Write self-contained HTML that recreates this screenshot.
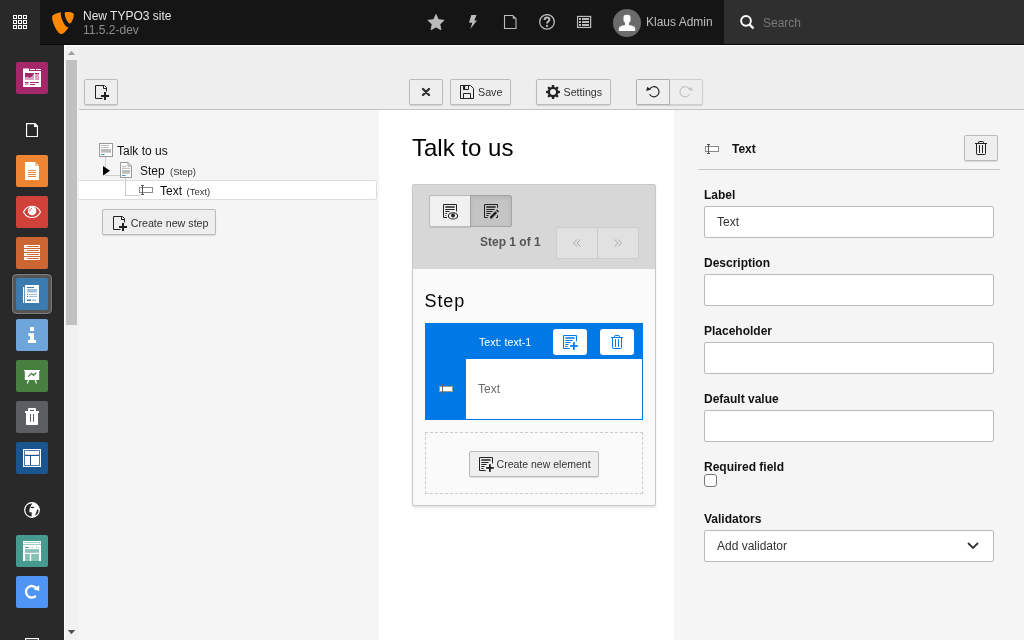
<!DOCTYPE html>
<html><head><meta charset="utf-8">
<style>
*{box-sizing:border-box}
html,body{margin:0;padding:0}
body{width:1024px;height:640px;overflow:hidden;position:relative;font-family:"Liberation Sans",sans-serif;background:#f5f5f5;color:#000}
.a{position:absolute}
svg{display:block}
.t{position:absolute;white-space:nowrap;line-height:1}
.btn{position:absolute;background:#eee;border:1px solid #bbb;border-radius:2px;box-shadow:0 1px 1px rgba(0,0,0,.12)}
.mi{position:absolute;left:16px;width:32px;height:32px;border-radius:2px}
.lbl{position:absolute;left:704px;font-weight:bold;font-size:12px;line-height:1;color:#111}
.inp{position:absolute;left:704px;width:290px;height:32px;background:#fff;border:1px solid #bbb;border-radius:2px}
</style></head><body><div id="root" style="position:absolute;left:0;top:0;width:1024px;height:640px;will-change:transform">

<!-- TOPBAR -->
<div class="a" style="left:0;top:0;width:1024px;height:45px;background:#151515"></div>
<div class="a" style="left:0;top:0;width:40px;height:45px;background:#292929"></div>
<div class="a" style="left:40px;top:44px;width:984px;height:1px;background:#0b0b0b"></div>
<div class="a" style="left:724px;top:0;width:300px;height:44px;background:#2f2f2f"></div>
<!-- grid icon -->
<svg class="a" style="left:12px;top:14px" width="16" height="16" viewBox="0 0 16 16" fill="none" stroke="#fff" stroke-width="1">
<rect x="1.5" y="1.5" width="3" height="3"/><rect x="6.5" y="1.5" width="3" height="3"/><rect x="11.5" y="1.5" width="3" height="3"/>
<rect x="1.5" y="6.5" width="3" height="3"/><rect x="6.5" y="6.5" width="3" height="3"/><rect x="11.5" y="6.5" width="3" height="3"/>
<rect x="1.5" y="11.5" width="3" height="3"/><rect x="6.5" y="11.5" width="3" height="3"/><rect x="11.5" y="11.5" width="3" height="3"/>
</svg>
<!-- typo3 logo -->
<svg class="a" style="left:52px;top:12px" width="22" height="22" viewBox="0 0 24 24"><path fill="#ff8700" d="M18.08 16.539c-.356.105-.64.144-1.012.144-3.048 0-7.524-10.652-7.524-14.197 0-1.305.31-1.74.745-2.116C6.56.808 2.082 2.177.651 3.917c-.31.436-.497 1.12-.497 1.99C.154 11.442 6.06 24 10.228 24c1.928 0 5.178-3.168 7.852-7.461M16.134 0c3.855 0 7.712.62 7.712 2.8 0 4.415-2.8 9.765-4.23 9.765-2.549 0-5.72-7.09-5.72-10.635C13.897.31 14.518 0 16.134 0"/></svg>
<div class="t" style="left:83px;top:10px;font-size:12px;color:#e6e6e6">New TYPO3 site</div>
<div class="t" style="left:83px;top:24px;font-size:12px;color:#8c8c8c">11.5.2-dev</div>

<!-- toolbar icons -->
<svg class="a" style="left:427px;top:13px" width="18" height="18" viewBox="0 0 18 18"><path fill="#bbb" stroke="#bbb" stroke-width=".7" stroke-linejoin="round" d="M9.00 1.35 L11.43 6.61 L17.18 7.29 L12.93 11.23 L14.05 16.91 L9.00 14.08 L3.95 16.91 L5.07 11.23 L0.82 7.29 L6.57 6.61z"/></svg>
<svg class="a" style="left:465px;top:14px" width="16" height="16" viewBox="0 0 16 16"><path fill="#bbb" d="M6.3 1h5.2L9.3 6.5H12L5.3 15l2-6.3H4z"/></svg>
<svg class="a" style="left:502px;top:14px" width="16" height="16" viewBox="0 0 16 16"><path fill="none" stroke="#bbb" stroke-width="1.1" d="M2.5 1.55h8.3l3.2 3.1v9.8H2.5z"/><path fill="#bbb" d="M10.8 1.5l3.2 3.2h-3.2z"/></svg>
<svg class="a" style="left:539px;top:14px" width="16" height="16" viewBox="0 0 16 16"><circle cx="8" cy="7.9" r="7.3" fill="none" stroke="#bbb" stroke-width="1.3"/><path fill="none" stroke="#bbb" stroke-width="2" d="M5.6 5.9c0-1.4 1.1-2.4 2.4-2.4s2.4.9 2.4 2.2c0 1.8-2.3 1.8-2.3 3.5v.4"/><rect x="7.05" y="10.9" width="2" height="2" fill="#bbb"/></svg>
<svg class="a" style="left:576px;top:14px" width="16" height="16" viewBox="0 0 16 16"><rect x="1.55" y="2.45" width="13.1" height="11" fill="none" stroke="#bbb" stroke-width="1.2"/><g fill="#bbb"><rect x="3" y="4" width="2" height="2"/><rect x="6" y="4" width="7" height="2"/><rect x="3" y="7" width="2" height="2"/><rect x="6" y="7" width="7" height="2"/><rect x="3" y="10" width="2" height="2"/><rect x="6" y="10" width="7" height="2"/></g></svg>
<!-- avatar -->
<div class="a" style="left:613px;top:9px;width:28px;height:28px;border-radius:50%;background:#6b6b6b;overflow:hidden">
<svg width="28" height="28" viewBox="0 0 28 28"><rect x="10.5" y="5.8" width="7" height="7.9" rx="2.6" fill="#fff"/><rect x="12" y="12" width="4" height="5" fill="#fff"/><path fill="#fff" d="M5.8 22v-2.2c0-1.6 1.3-2.5 3-3l3.2-.9 2 1 2-1 3.2.9c1.7.5 3 1.4 3 3V22z"/></svg>
</div>
<div class="t" style="left:646px;top:16px;font-size:12px;color:#bdbdbd">Klaus Admin</div>
<!-- search -->
<svg class="a" style="left:739px;top:15px" width="16" height="16" viewBox="0 0 16 16"><circle cx="7" cy="5.85" r="4.9" fill="none" stroke="#fff" stroke-width="1.9"/><path stroke="#fff" stroke-width="2.4" d="M10.2 9.2l4.3 4.3"/></svg>
<div class="t" style="left:763px;top:17px;font-size:12px;color:#7a7a7a">Search</div>

<!-- SIDEBAR -->
<div class="a" style="left:0;top:45px;width:64px;height:595px;background:#292929"></div>

<!-- MODULE ICONS -->
<div class="mi" style="top:62px;background:#a4276a"><svg width="32" height="32" viewBox="0 0 32 32"><path fill="#fff" d="M7 6.5h6v2.5h12V25H7z"/><rect x="14" y="7" width="5" height="1" fill="#fff"/><rect x="20" y="7" width="5" height="1" fill="#fff"/><rect x="9" y="11" width="9" height="7" fill="#a4276a"/><path fill="#d9a3c1" d="M9 18v-2.5l2.5-1 2 1.2 2.5-1.2 2-3V18z"/><rect x="19" y="11" width="4" height="7" fill="#d9a3c1"/><rect x="19" y="11" width="4" height="1" fill="#a4276a"/><rect x="9" y="20" width="3.5" height="3" fill="#d9a3c1"/><rect x="9" y="20" width="3.5" height="1" fill="#a4276a"/><rect x="14" y="20" width="9" height="1" fill="#a4276a"/><rect x="14" y="22" width="5" height="1" fill="#a4276a"/></svg></div>
<svg class="a" style="left:24px;top:122px" width="16" height="16" viewBox="0 0 16 16"><path fill="none" stroke="#fff" stroke-width="1.15" d="M2.55 1.55H11l2.45 2.45v10.45H2.55z M10.55 1.55V4.45h2.9"/><path fill="#fff" d="M11 1.55l2.45 2.45H11z"/></svg>
<div class="mi" style="top:155px;background:#ee8532"><svg width="32" height="32" viewBox="0 0 32 32"><path fill="#fff" d="M9 7h10l4 4v14H9z"/><path fill="#f6c29b" d="M19 7v4h4z"/><g fill="#ee8532"><rect x="12" y="15" width="8" height="1"/><rect x="12" y="17" width="8" height="1"/><rect x="12" y="19" width="8" height="1"/><rect x="12" y="21" width="8" height="1"/></g></svg></div>
<div class="mi" style="top:196px;background:#d0413a"><svg width="32" height="32" viewBox="0 0 32 32"><path fill="none" stroke="#fff" stroke-width="1.1" d="M7.5 15.9c1.8-3.4 5-5.6 8.5-5.6s6.7 2.2 8.5 5.6c-1.8 3.4-5 5.6-8.5 5.6s-6.7-2.2-8.5-5.6z"/><circle cx="16.1" cy="14.9" r="4.3" fill="#fff"/><path fill="none" stroke="#d0413a" stroke-width=".9" d="M13.9 15.6c-.2-1.5.6-2.9 1.9-3.3"/></svg></div>
<div class="mi" style="top:237px;background:#cb6633"><svg width="32" height="32" viewBox="0 0 32 32"><rect x="8" y="8" width="16" height="3" fill="#fff"/><rect x="11" y="9" width="12" height="1" rx=".5" fill="#cb6633"/><rect x="9" y="9" width="1" height="1" fill="#e9b89d"/><rect x="8" y="12" width="16" height="3" fill="#fff"/><rect x="11" y="13" width="12" height="1" rx=".5" fill="#cb6633"/><rect x="9" y="13" width="1" height="1" fill="#e9b89d"/><rect x="8" y="16" width="16" height="3" fill="#fff"/><rect x="11" y="17" width="12" height="1" rx=".5" fill="#cb6633"/><rect x="9" y="17" width="1" height="1" fill="#e9b89d"/><rect x="8" y="20" width="16" height="3" fill="#fff"/><rect x="11" y="21" width="12" height="1" rx=".5" fill="#cb6633"/><rect x="9" y="21" width="1" height="1" fill="#e9b89d"/></svg></div>
<div class="a" style="left:11px;top:273px;width:42px;height:42px;border:1px solid #1f1f1f;border-radius:5px"></div>
<div class="a" style="left:12px;top:274px;width:40px;height:40px;background:#555;border:1px solid #808080;border-radius:4px"></div>
<div class="mi" style="top:278px;background:#3b7bb0"><svg width="32" height="32" viewBox="0 0 32 32"><rect x="7" y="9" width="1.2" height="16" fill="#fff"/><rect x="9" y="7" width="14" height="18" fill="#fff"/><rect x="11" y="9" width="7" height="1" fill="#3b7bb0"/><rect x="11" y="11" width="10" height="3.5" fill="#9fc0dc"/><rect x="11" y="16" width="1" height="1" fill="#3b7bb0"/><rect x="13" y="16" width="8" height="1" fill="#9fc0dc"/><rect x="11" y="18" width="1" height="1" fill="#3b7bb0"/><rect x="13" y="18" width="8" height="1" fill="#9fc0dc"/><rect x="11" y="21.5" width="4" height="1.5" fill="#3b7bb0"/><rect x="16" y="21.5" width="4" height="1.5" fill="#9fc0dc"/></svg></div>
<div class="mi" style="top:319px;background:#6ea6dc"><svg width="32" height="32" viewBox="0 0 32 32"><rect x="14" y="8" width="4" height="4" fill="#fff"/><path fill="#fff" d="M12.3 14.2H18V21h2v3h-8v-3h2v-4.3h-1.7z"/></svg></div>
<div class="mi" style="top:360px;background:#477f41"><svg width="32" height="32" viewBox="0 0 32 32"><path fill="#fff" d="M8 10h16v1h-0.8v9H8.8v-9H8z"/><path fill="none" stroke="#477f41" stroke-width="1.3" d="M12.2 16.6l3.3-3.3 2 2 2.7-2.5"/><path fill="none" stroke="#fff" stroke-width="1.1" d="M12.6 20l-1.3 3.5M19.2 20l1.3 3.5"/></svg></div>
<div class="mi" style="top:401px;background:#5b5f63"><svg width="32" height="32" viewBox="0 0 32 32"><path fill="#fff" d="M12 10V7.8c0-.5.3-.8.8-.8h6.4c.5 0 .8.3.8.8V10h3v2H9v-2z"/><rect x="14" y="9" width="4" height="1" fill="#5b5f63"/><path fill="#fff" d="M10 12h12v11.2c0 .5-.3.8-.8.8H10.8c-.5 0-.8-.3-.8-.8z"/><rect x="14" y="13" width="1" height="7.8" fill="#5b5f63"/><rect x="17" y="13" width="1" height="7.8" fill="#5b5f63"/></svg></div>
<div class="mi" style="top:442px;background:#1b5590"><svg width="32" height="32" viewBox="0 0 32 32"><rect x="7.6" y="7.6" width="16.8" height="16.8" fill="none" stroke="#fff" stroke-width="1.2"/><rect x="9" y="9" width="14" height="3.8" fill="#fff"/><rect x="9" y="14" width="5" height="9" fill="#fff"/><rect x="15" y="14" width="8" height="9" fill="#fff"/></svg></div>
<svg class="a" style="left:24px;top:502px" width="16" height="16" viewBox="0 0 16 16"><circle cx="8" cy="8" r="7.2" fill="#fff"/><g fill="#292929"><path d="M8.3 1.3L6.8 1.25A6.85 6.85 0 0 0 5.66 14.44L7.7 14.4V10.2H5.4V7.4L6.6 4.6z"/><ellipse cx="8.5" cy="5.6" rx="1.9" ry=".75"/><path d="M13.3 7.3l1.5.9-.3 2.3-2.1 3.1-1.3-.2z"/></g><circle cx="8" cy="8" r="7.4" fill="none" stroke="#fff" stroke-width="1.1"/></svg>
<div class="mi" style="top:535px;background:#479a8e"><svg width="32" height="32" viewBox="0 0 32 32"><rect x="7" y="6" width="18" height="20" fill="#fff"/><rect x="8.3" y="7.2" width="13.5" height=".9" rx=".45" fill="#86c0b7"/><circle cx="23.4" cy="7.6" r=".7" fill="#479a8e"/><rect x="7" y="9.1" width="18" height=".8" fill="#86c0b7"/><rect x="9" y="12" width="3.8" height=".9" fill="#479a8e"/><circle cx="14.5" cy="12.4" r=".5" fill="#86c0b7"/><circle cx="16.5" cy="12.4" r=".5" fill="#86c0b7"/><circle cx="20.5" cy="12.4" r=".5" fill="#86c0b7"/><circle cx="22.5" cy="12.4" r=".5" fill="#86c0b7"/><rect x="9" y="14.2" width="14" height="3.6" fill="#86c0b7"/><rect x="9" y="19" width="4.8" height="7" fill="#86c0b7"/><rect x="15.2" y="19" width="7.8" height="7" fill="#86c0b7"/></svg></div>
<div class="mi" style="top:576px;background:#4f93f5"><svg width="32" height="32" viewBox="0 0 32 32"><path fill="none" stroke="#fff" stroke-width="2.3" d="M20.4 12.3A5.8 5.8 0 1 0 19.9 19.9"/><path fill="#fff" d="M17.3 13.2l5.9-3.9v5.6z"/></svg></div>
<svg class="a" style="left:24px;top:636px" width="16" height="16" viewBox="0 0 16 16"><rect x="1.6" y="2.6" width="12.8" height="12.8" fill="none" stroke="#fff" stroke-width="1.2"/></svg>

<!-- SCROLLBAR -->
<div class="a" style="left:64px;top:45px;width:15px;height:595px;background:#f1f1f1;border-left:1px solid #fff"></div>
<div class="a" style="left:64px;top:45px;width:960px;height:1px;background:#fff"></div>
<div class="a" style="left:66px;top:60px;width:11px;height:265px;background:#c1c1c1"></div>
<svg class="a" style="left:67px;top:50px" width="9" height="6" viewBox="0 0 9 6"><path fill="#a3a3a3" d="M4.5 0.8L8.2 5H0.8z"/></svg>
<svg class="a" style="left:67px;top:629px" width="9" height="6" viewBox="0 0 9 6"><path fill="#505050" d="M0.8 1h7.4L4.5 5.2z"/></svg>

<!-- DOCHEADER -->
<div class="a" style="left:79px;top:46px;width:945px;height:63px;background:#eee"></div>
<div class="a" style="left:79px;top:109px;width:945px;height:1px;background:#c3c3c3"></div>

<!-- PANELS -->
<div class="a" style="left:79px;top:110px;width:300px;height:530px;background:#f5f5f5"></div>
<div class="a" style="left:379px;top:110px;width:295px;height:530px;background:#fff"></div>
<div class="a" style="left:674px;top:110px;width:350px;height:530px;background:#f5f5f5"></div>


<!-- DOCHEADER BUTTONS -->
<div class="btn" style="left:84px;top:79px;width:34px;height:26px"></div>
<svg class="a" style="left:92px;top:82px" width="20" height="20" viewBox="0 0 20 20"><path fill="none" stroke="#222" stroke-width="1" d="M10.6 16.5H3.5V3.5h9l2 2v3.9M11.5 3.5v3h3"/><rect x="12" y="10" width="2" height="8" fill="#222"/><rect x="9" y="13" width="8" height="2" fill="#222"/></svg>

<div class="btn" style="left:409px;top:79px;width:34px;height:26px"></div>
<svg class="a" style="left:418px;top:84px" width="16" height="16" viewBox="0 0 16 16"><path stroke="#333" stroke-width="2.4" stroke-linecap="round" d="M5 5l6 6M11 5l-6 6"/></svg>
<div class="btn" style="left:450px;top:79px;width:61px;height:26px"></div>
<svg class="a" style="left:459px;top:84px" width="16" height="16" viewBox="0 0 16 16"><path fill="none" stroke="#222" stroke-width="1" d="M1.5 1.5h10l3 3v10h-13z M4.5 1.5v4h5v-4 M4.5 14.5v-5h7v5"/><rect x="4" y="1.5" width="2.2" height="4" fill="#222"/></svg>
<div class="t" style="left:478px;top:87px;font-size:10.7px;color:#333">Save</div>

<div class="btn" style="left:536px;top:79px;width:75px;height:26px"></div>
<svg class="a" style="left:545px;top:84px" width="16" height="16" viewBox="0 0 16 16"><g fill="#222"><circle cx="8" cy="8" r="5.3"/><rect x="6.8" y="1" width="2.4" height="14" rx=".6"/><rect x="6.8" y="1" width="2.4" height="14" rx=".6" transform="rotate(45 8 8)"/><rect x="6.8" y="1" width="2.4" height="14" rx=".6" transform="rotate(90 8 8)"/><rect x="6.8" y="1" width="2.4" height="14" rx=".6" transform="rotate(135 8 8)"/></g><circle cx="8" cy="8" r="3" fill="#eee"/></svg>
<div class="t" style="left:563.5px;top:87px;font-size:10.7px;color:#333">Settings</div>

<div class="btn" style="left:669px;top:79px;width:34px;height:26px;border-color:#cfcfcf;border-radius:0 2px 2px 0"></div>
<div class="btn" style="left:636px;top:79px;width:34px;height:26px;border-color:#b0b0b0;border-radius:2px 0 0 2px"></div>
<svg class="a" style="left:645px;top:84px" width="16" height="16" viewBox="0 0 16 16"><path fill="none" stroke="#222" stroke-width="1.2" d="M4.5 5.2A5.1 5.1 0 1 1 4.5 10.3"/><path fill="#222" d="M1.2 6.9l1.1-4.1 3.5 2.8z"/></svg>
<svg class="a" style="left:678px;top:84px" width="16" height="16" viewBox="0 0 16 16"><path fill="none" stroke="#c4c4c4" stroke-width="1.2" d="M11.5 5.2A5.1 5.1 0 1 0 11.5 10.3"/><path fill="#c4c4c4" d="M14.8 6.9l-1.1-4.1-3.5 2.8z"/></svg>

<!-- TREE -->
<div class="a" style="left:79px;top:180px;width:298px;height:20px;background:#fff;border-top:1px solid #ddd;border-bottom:1px solid #ddd;border-right:1px solid #ddd;border-radius:0 3px 3px 0"></div>
<div class="a" style="left:105px;top:157px;width:1px;height:19px;background:#ccc"></div>
<div class="a" style="left:105px;top:175px;width:15px;height:1px;background:#ccc"></div>
<div class="a" style="left:125px;top:178px;width:1px;height:18px;background:#ccc"></div>
<div class="a" style="left:125px;top:195px;width:15px;height:1px;background:#ccc"></div>
<svg class="a" style="left:99px;top:143px" width="14" height="14" viewBox="0 0 14 14"><rect x=".5" y=".5" width="13" height="13" fill="#fff" stroke="#999"/><rect x="2" y="2.2" width="8" height=".8" fill="#aaa"/><rect x="2" y="4" width="8" height=".8" fill="#aaa"/><rect x="2" y="6" width="10" height="3.7" fill="#bbb"/><rect x="2" y="11" width="3.5" height="1" fill="#4a90e2"/></svg>
<svg class="a" style="left:103px;top:166px" width="7" height="10" viewBox="0 0 7 10"><path fill="#000" d="M0 0l7 4.8L0 9.6z"/></svg>
<svg class="a" style="left:120px;top:162px" width="12" height="16" viewBox="0 0 12 16"><path fill="#fff" stroke="#999" d="M.5.5h7.5l3.5 3.5v11.5H.5z"/><path fill="none" stroke="#999" d="M8 .5v3.5h3.5"/><rect x="2" y="3.8" width="4.5" height=".9" fill="#aaa"/><rect x="2" y="5.8" width="8" height=".9" fill="#aaa"/><rect x="2" y="8" width="8" height="3.7" fill="#bbb"/><rect x="2" y="13" width="3.5" height="1" fill="#4a90e2"/></svg>
<div class="t" style="left:117px;top:145px;font-size:12px;color:#111">Talk to us</div>
<div class="t" style="left:140px;top:165px;font-size:12px;color:#111">Step <span style="font-size:9.5px;color:#333;margin-left:2px">(Step)</span></div>
<svg class="a" style="left:138px;top:184px" width="16" height="12" viewBox="0 0 16 12"><rect x="1.5" y="3.5" width="13" height="5" fill="#fff" stroke="#8a8a8a"/><path fill="none" stroke="#555" d="M4.5 1v10M3 1.5h3M3 10.5h3"/></svg>
<div class="t" style="left:160px;top:185px;font-size:12px;color:#111">Text <span style="font-size:9.5px;color:#333;margin-left:1.2px">(Text)</span></div>

<div class="btn" style="left:102px;top:209px;width:114px;height:26px"></div>
<svg class="a" style="left:110px;top:213px" width="20" height="20" viewBox="0 0 20 20"><path fill="none" stroke="#222" stroke-width="1" d="M10.6 16.5H3.5V3.5h9l2 2v3.9M11.5 3.5v3h3"/><rect x="12" y="10" width="2" height="8" fill="#222"/><rect x="9" y="13" width="8" height="2" fill="#222"/></svg>
<div class="t" style="left:130.7px;top:218px;font-size:10.7px;color:#333">Create new step</div>


<!-- STAGE -->
<div class="t" style="left:412px;top:136px;font-size:24px;color:#000">Talk to us</div>
<div class="a" style="left:412px;top:184px;width:244px;height:322px;background:#fafafa;border:1px solid #c8c8c8;border-radius:2px;box-shadow:0 2px 2px rgba(0,0,0,.1)"></div>
<div class="a" style="left:413px;top:185px;width:242px;height:84px;background:#d7d7d7"></div>
<div class="a" style="left:429px;top:195px;width:42px;height:32px;background:#f0f0f0;border:1px solid #bbb;border-radius:2px 0 0 2px;box-shadow:0 1px 1px rgba(0,0,0,.1)"></div>
<div class="a" style="left:470px;top:195px;width:42px;height:32px;background:#c4c4c4;border:1px solid #a5a5a5;border-radius:0 2px 2px 0;box-shadow:inset 0 2px 4px rgba(0,0,0,.08)"></div>
<svg class="a" style="left:440px;top:201px" width="20" height="20" viewBox="0 0 20 20"><path fill="none" stroke="#222" stroke-width="1" d="M7 16.5H3.5V3.5h13v7"/><g fill="#222"><rect x="5.2" y="5.2" width="9.6" height="1.6" rx=".5"/><rect x="5.2" y="8" width="9.6" height="1.1" rx=".5"/><rect x="5.2" y="10" width="4.4" height="1.1" rx=".5"/><rect x="5.2" y="12" width="2" height="1.1" rx=".5"/><rect x="5.2" y="14" width="1.1" height="1.1" rx=".5"/></g><ellipse cx="13" cy="14.9" rx="4.6" ry="3.1" fill="#f0f0f0" stroke="#222" stroke-width="1.1"/><circle cx="13" cy="14.5" r="1.9" fill="#222"/></svg>
<svg class="a" style="left:481px;top:201px" width="20" height="20" viewBox="0 0 20 20"><path fill="none" stroke="#222" stroke-width="1" d="M6.7 16.5H3.5V3.5h13v3.2M16.5 14.2v2.3h-1.5"/><g fill="#222"><rect x="5.2" y="5.2" width="9.5" height="1.6" rx=".5"/><rect x="5.2" y="8" width="8.5" height="1" rx=".5"/><rect x="5.2" y="10" width="6.5" height="1" rx=".5"/><rect x="5.2" y="12" width="4.5" height="1" rx=".5"/><rect x="5.2" y="14" width="2.5" height="1" rx=".5"/></g><path stroke="#222" stroke-width="2.6" d="M9.6 16.8l5.6-5.6"/><path stroke="#222" stroke-width="2.6" d="M15.9 10.5l1.2-1.2"/><path fill="#222" d="M9.2 17.5l.2-2 1.8 1.8z"/></svg>
<div class="t" style="left:480px;top:236px;font-size:12px;font-weight:bold;color:#555">Step 1 of 1</div>
<div class="a" style="left:556px;top:227px;width:83px;height:32px;background:#e1e1e1;border:1px solid #cdcdcd;border-radius:2px"></div>
<div class="a" style="left:597px;top:228px;width:1px;height:30px;background:#c8c8c8"></div>
<svg class="a" style="left:572px;top:238px" width="10" height="10" viewBox="0 0 10 10"><path fill="none" stroke="#aaa" stroke-width="1" d="M5 1.5L1.5 5 5 8.5M8.5 1.5L5 5l3.5 3.5"/></svg>
<svg class="a" style="left:613px;top:238px" width="10" height="10" viewBox="0 0 10 10"><path fill="none" stroke="#aaa" stroke-width="1" d="M1.5 1.5L5 5 1.5 8.5M5 1.5L8.5 5 5 8.5"/></svg>

<div class="t" style="left:424.5px;top:292px;font-size:18px;letter-spacing:.9px;color:#000">Step</div>
<div class="a" style="left:425px;top:323px;width:218px;height:97px;background:#0078e6"></div>
<div class="a" style="left:466px;top:359px;width:176px;height:60px;background:#fff"></div>
<div class="t" style="left:479px;top:337px;font-size:10.7px;color:#fff">Text: text-1</div>
<div class="a" style="left:553px;top:329px;width:34px;height:26px;background:#fff;border-radius:3px"></div>
<div class="a" style="left:600px;top:329px;width:34px;height:26px;background:#fff;border-radius:3px"></div>
<svg class="a" style="left:560px;top:332px" width="20" height="20" viewBox="0 0 20 20"><path fill="none" stroke="#0078e6" stroke-width="1" d="M9.7 16.5H3.5V3.5h13v5.9"/><g fill="#0078e6"><rect x="5.2" y="5.2" width="9.5" height="1.6" rx=".6"/><rect x="5.2" y="8" width="7.5" height="1" rx=".5"/><rect x="5.2" y="10" width="5.5" height="1" rx=".5"/><rect x="5.2" y="12" width="3.5" height="1" rx=".5"/><rect x="5.2" y="14" width="2.5" height="1" rx=".5"/><rect x="13" y="10.2" width="1.8" height="7.6"/><rect x="10.2" y="13" width="7.6" height="1.8"/></g></svg>
<svg class="a" style="left:609px;top:334px" width="16" height="16" viewBox="0 0 16 16"><path fill="none" stroke="#0078e6" stroke-width="1" d="M2 3.5h12M5.6 3.5V2.1c0-.4.3-.6.6-.6h3.6c.3 0 .6.2.6.6v1.4M3.5 3.5v10.2c0 .5.3.8.8.8h7.4c.5 0 .8-.3.8-.8V3.5"/><path stroke="#0078e6" stroke-width="1" stroke-linecap="round" d="M6.5 5.5v7M9.5 5.5v7"/></svg>
<svg class="a" style="left:439px;top:384px" width="14" height="10" viewBox="0 0 14 10"><rect x=".5" y="2.5" width="13" height="5" fill="#fff" stroke="#9a9a9a"/><path fill="none" stroke="#666" d="M3.5 .5v9M2 .5h3M2 9.5h3"/></svg>
<div class="t" style="left:478px;top:383px;font-size:12px;color:#6b6b6b">Text</div>

<div class="a" style="left:425px;top:432px;width:218px;height:62px;border:1px dashed #ccc"></div>
<div class="btn" style="left:469px;top:451px;width:130px;height:26px"></div>
<svg class="a" style="left:476px;top:454px" width="20" height="20" viewBox="0 0 20 20"><path fill="none" stroke="#222" stroke-width="1" d="M9.7 16.5H3.5V3.5h13v5.9"/><g fill="#222"><rect x="5.2" y="5.2" width="9.5" height="1.6" rx=".6"/><rect x="5.2" y="8" width="7.5" height="1" rx=".5"/><rect x="5.2" y="10" width="5.5" height="1" rx=".5"/><rect x="5.2" y="12" width="3.5" height="1" rx=".5"/><rect x="5.2" y="14" width="2.5" height="1" rx=".5"/><rect x="13" y="10.2" width="1.8" height="7.6"/><rect x="10.2" y="13" width="7.6" height="1.8"/></g></svg>
<div class="t" style="left:496.6px;top:459px;font-size:10.5px;color:#333">Create new element</div>

<!-- INSPECTOR -->
<svg class="a" style="left:704px;top:143px" width="16" height="12" viewBox="0 0 16 12"><rect x="1.5" y="3.5" width="13" height="5" fill="#fff" stroke="#8a8a8a"/><path fill="none" stroke="#555" d="M4.5 1v10M3 1.5h3M3 10.5h3"/></svg>
<div class="t" style="left:732px;top:143px;font-size:12px;font-weight:bold;color:#111">Text</div>
<div class="btn" style="left:964px;top:135px;width:34px;height:26px"></div>
<svg class="a" style="left:973px;top:140px" width="16" height="16" viewBox="0 0 16 16"><path fill="none" stroke="#222" stroke-width="1" d="M2 3.5h12M5.6 3.5V2.1c0-.4.3-.6.6-.6h3.6c.3 0 .6.2.6.6v1.4M3.5 3.5v10.2c0 .5.3.8.8.8h7.4c.5 0 .8-.3.8-.8V3.5"/><path stroke="#222" stroke-width="1" stroke-linecap="round" d="M6.5 5.5v7M9.5 5.5v7"/></svg>
<div class="a" style="left:698px;top:169px;width:302px;height:1px;background:#c8c8c8"></div>

<div class="lbl" style="top:189px">Label</div>
<div class="inp" style="top:206px"></div>
<div class="t" style="left:717px;top:216px;font-size:12px;color:#333">Text</div>
<div class="lbl" style="top:257px">Description</div>
<div class="inp" style="top:274px"></div>
<div class="lbl" style="top:325px">Placeholder</div>
<div class="inp" style="top:342px"></div>
<div class="lbl" style="top:393px">Default value</div>
<div class="inp" style="top:410px"></div>
<div class="lbl" style="top:461px">Required field</div>
<div class="a" style="left:704px;top:474px;width:13px;height:13px;background:#fff;border:1px solid #777;border-radius:3px"></div>
<div class="lbl" style="top:513px">Validators</div>
<div class="inp" style="top:530px"></div>
<div class="t" style="left:717px;top:540px;font-size:12px;color:#333">Add validator</div>
<svg class="a" style="left:966px;top:540px" width="14" height="12" viewBox="0 0 14 12"><path fill="none" stroke="#333" stroke-width="1.8" d="M2 3l5 5 5-5"/></svg>

</div></body></html>
